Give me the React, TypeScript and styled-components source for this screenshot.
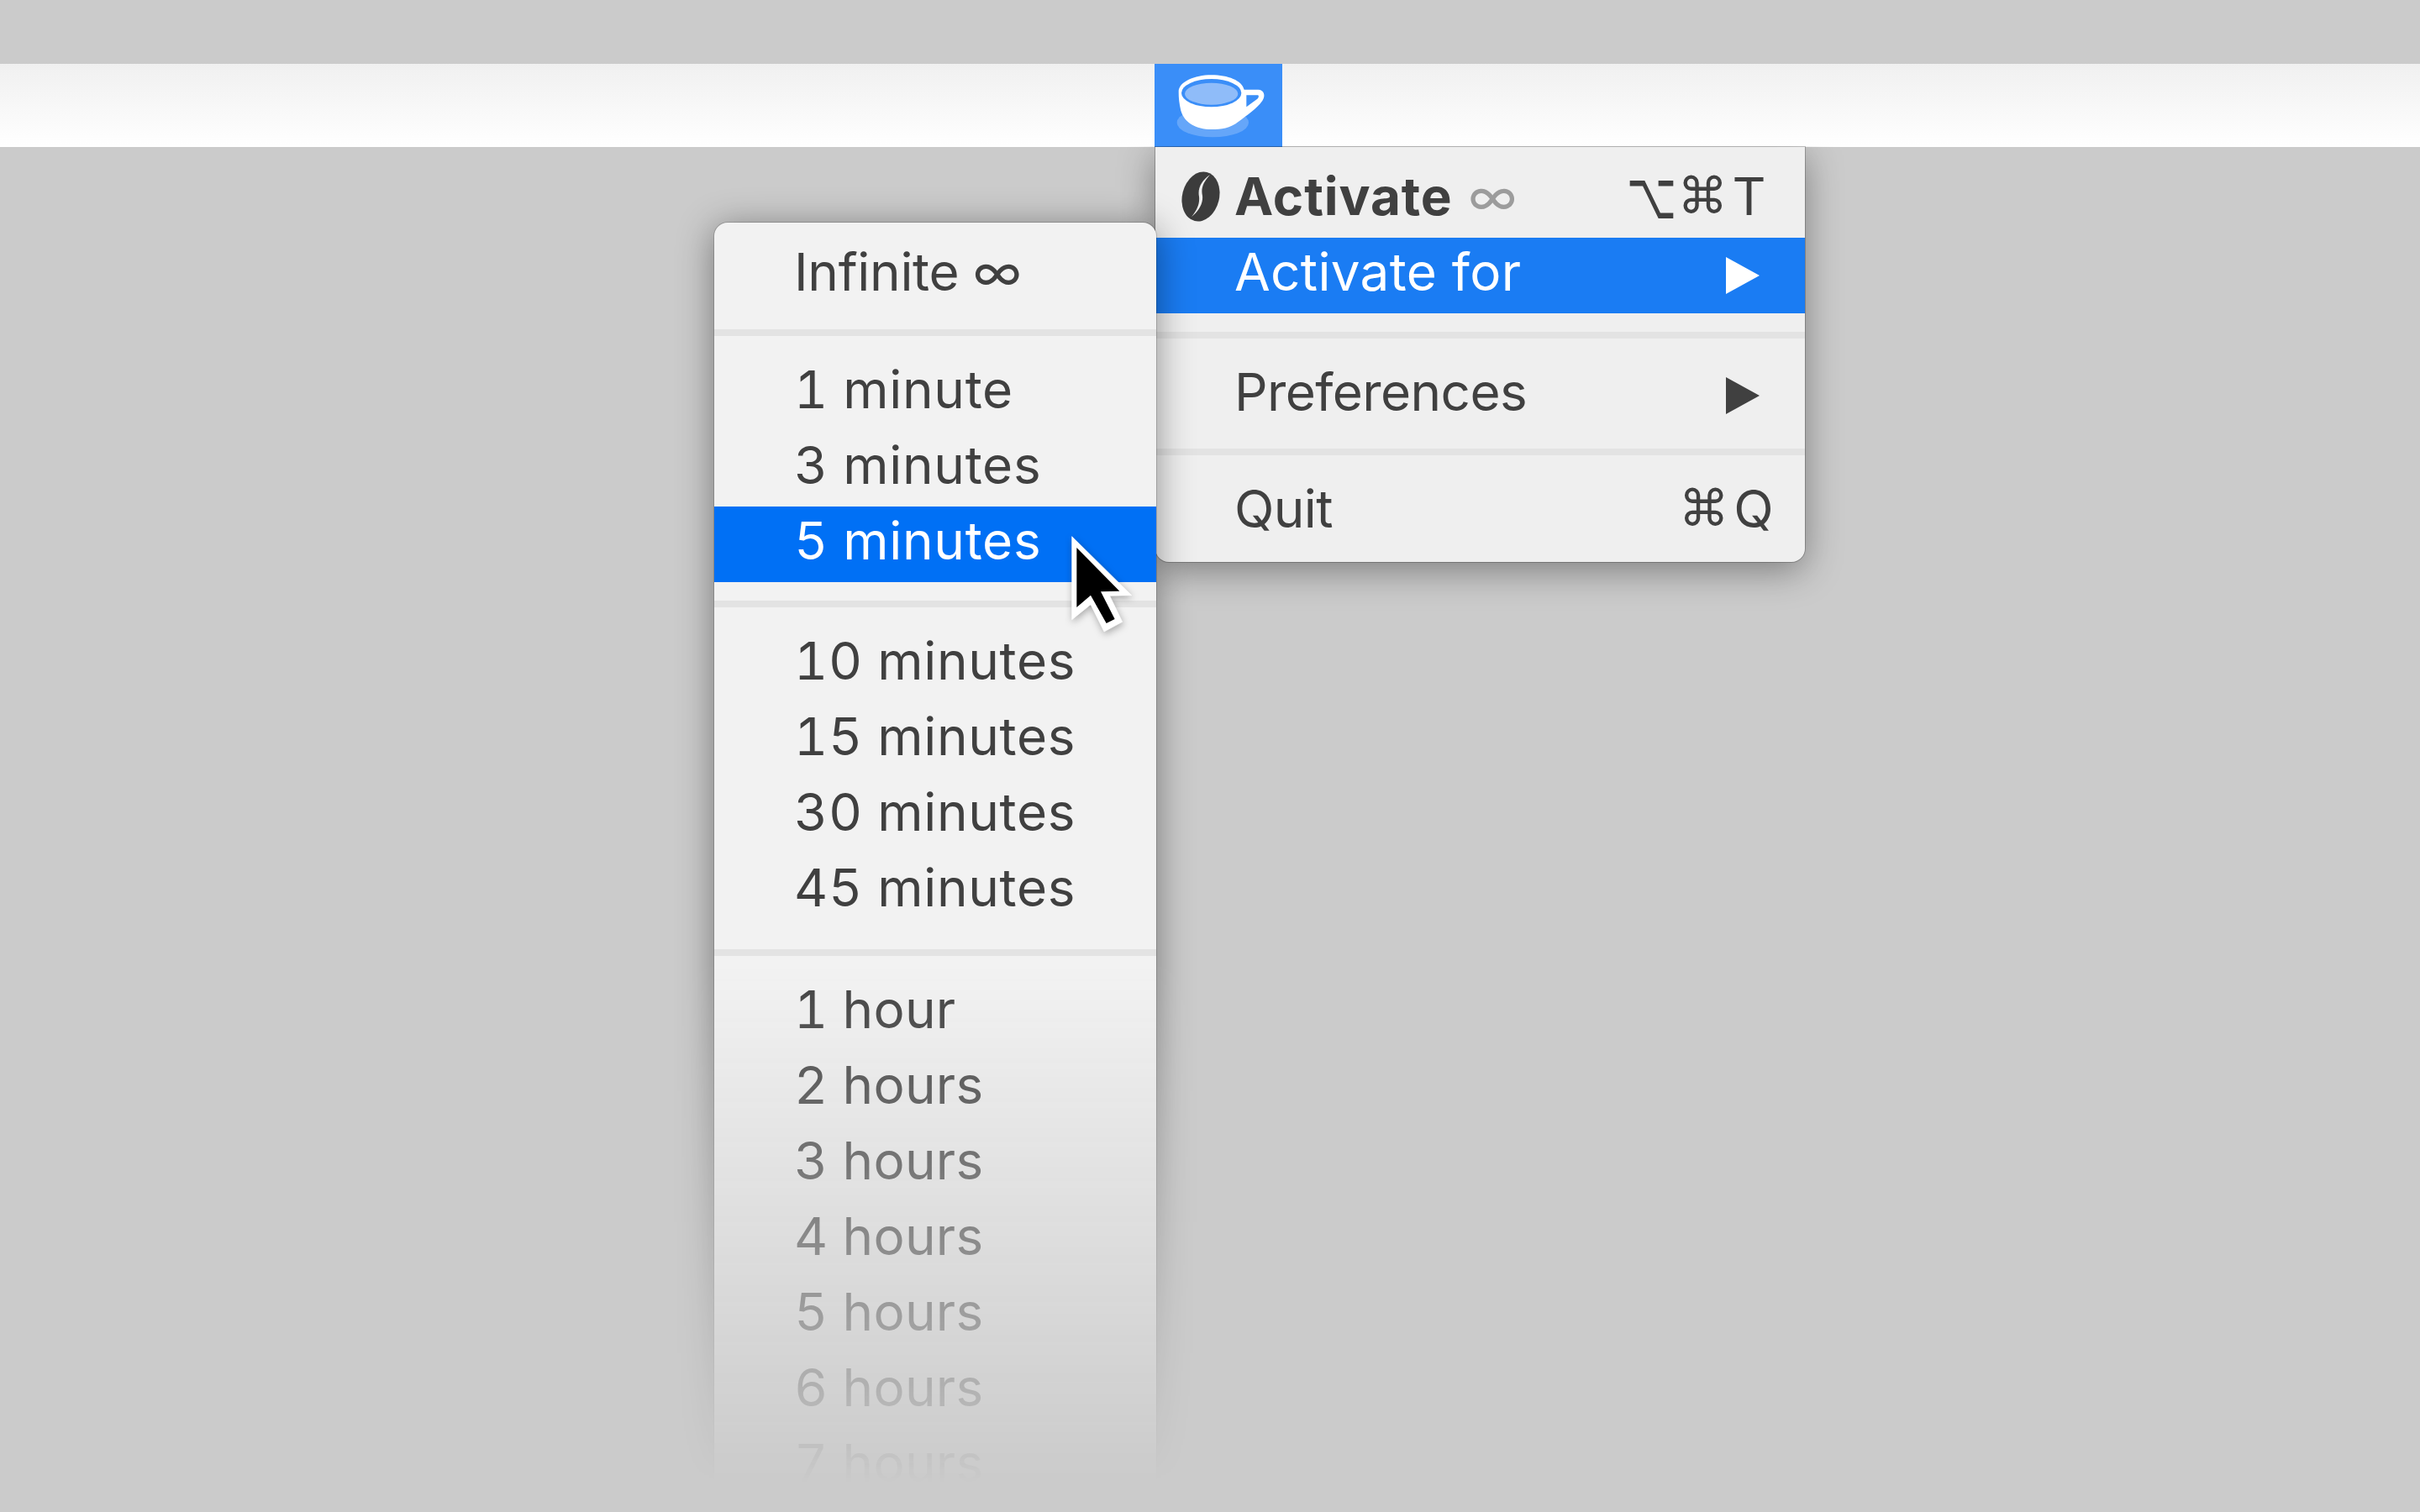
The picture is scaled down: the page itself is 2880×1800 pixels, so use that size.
import styled, { createGlobalStyle } from 'styled-components';

const GlobalStyle = createGlobalStyle`
  html, body {
    margin: 0;
    height: 1800px;
    overflow: hidden;
    background: #cbcbcb;
    font-family: Inter, "DejaVu Sans", sans-serif;
  }
`;

const submenuGroups = [
  { gapAbove: 0, tracking: -0.3, items: ['Infinite ∞'] },
  { gapAbove: 19, tracking: 0.7, items: ['1 minute', '3 minutes', '5 minutes'] },
  { gapAbove: 22, tracking: 0.7, items: ['10 minutes', '15 minutes', '30 minutes', '45 minutes'] },
  { gapAbove: 24, tracking: 0.3, items: ['1 hour', '2 hours', '3 hours', '4 hours', '5 hours', '6 hours', '7 hours'] },
];

function CupIcon() {
  return (
    <svg width="152" height="99" viewBox="42 18 456 297">
      <ellipse cx="250" cy="228" rx="128" ry="52" fill="#fff" opacity="0.22" />
      <path
        d="M128 118 C128 82 185 58 245 58 C305 58 354 78 362 110 L412 110 C432 110 440 130 427 150 C405 180 372 202 342 224 C312 248 280 252 245 252 C190 252 148 227 136 185 C130 160 128 140 128 118 Z"
        fill="#fff"
      />
      <path d="M370 130 L410 130 C415 130 415 138 409 143 L370 172 Z" fill="#3a8ef8" />
      <ellipse cx="245" cy="122" rx="107" ry="50" fill="#3a8ef8" />
      <ellipse cx="245" cy="125" rx="95" ry="39" fill="#8fbcf9" />
    </svg>
  );
}

function BeanIcon() {
  return (
    <svg width="52" height="60" viewBox="0 0 52 60">
      <ellipse cx="26" cy="30" rx="22" ry="30" fill="#3c3c3c" transform="rotate(14 26 30)" />
      <path d="M37 4 C29 13 26 20 28 29 C29 38 24 47 15 54 C21 47 25 39 24 30 C22 20 27 11 37 4 Z" fill="#efefef" />
    </svg>
  );
}

function Cursor() {
  return (
    <svg width="74" height="116" viewBox="103 113 222 348">
      <path
        d="M105 115 L318 325 L240 327 L285 420 L220 455 L172 358 L105 412 Z"
        fill="#fff"
        stroke="#fff"
        strokeWidth="2"
        strokeLinejoin="round"
      />
      <path d="M122 155 L275 310 L208 312 L258 410 L228 425 L172 325 L122 368 Z" fill="#000" />
    </svg>
  );
}

export default function App() {
  return (
    <Page>
      <GlobalStyle />
      <MenuBar>
        <StatusItem>
          <CupIcon />
        </StatusItem>
        <MainMenu>
          <MenuRow>
            <BeanSlot>
              <BeanIcon />
            </BeanSlot>
            <BoldLabel>
              Activate <Muted>∞</Muted>
            </BoldLabel>
            <Shortcut $right={47}>
              <OptionGlyph>⌥</OptionGlyph>
              <Glyph>⌘</Glyph>T
            </Shortcut>
          </MenuRow>
          <ActiveRow>
            <span>Activate for</span>
            <Arrow $light />
          </ActiveRow>
          <Separator $above={22} $below={23} />
          <MenuRow>
            <span>Preferences</span>
            <Arrow />
          </MenuRow>
          <Separator $above={18} $below={23} />
          <MenuRow>
            <span>Quit</span>
            <Shortcut $right={38}>
              <Glyph>⌘</Glyph>Q
            </Shortcut>
          </MenuRow>
        </MainMenu>
        <SubmenuFade>
          <Submenu>
            {submenuGroups.map((group) => (
              <div key={group.items[0]}>
                {group.gapAbove > 0 && <Separator $above={group.gapAbove} $below={23} />}
                {group.items.map((item) =>
                  item === '5 minutes' ? (
                    <SubmenuActiveRow key={item} $tracking={group.tracking}>
                      {item}
                      <CursorSpot>
                        <Cursor />
                      </CursorSpot>
                    </SubmenuActiveRow>
                  ) : (
                    <SubmenuRow key={item} $tracking={group.tracking}>
                      {item}
                    </SubmenuRow>
                  ),
                )}
              </div>
            ))}
          </Submenu>
        </SubmenuFade>
      </MenuBar>
    </Page>
  );
}

const Page = styled.div`
  width: 2880px;
  height: 1800px;
  padding-top: 76px;
  box-sizing: border-box;
  overflow: hidden;
  filter: blur(0.7px);
`;

const MenuBar = styled.div`
  position: relative;
  height: 99px;
  padding-left: 1374px;
  background: linear-gradient(#f0f0f0, #ffffff);
`;

const StatusItem = styled.div`
  width: 152px;
  height: 99px;
  background: #3a8ef8;
  display: flex;
`;

const MainMenu = styled.div`
  position: absolute;
  left: 1375px;
  top: 99px;
  width: 773px;
  height: 494px;
  padding-top: 18px;
  box-sizing: border-box;
  background: #efefef;
  border-radius: 0 0 16px 16px;
  box-shadow: 0 0 0 1px rgba(0, 0, 0, 0.22), 0 10px 44px rgba(0, 0, 0, 0.38);
  clip-path: inset(-1px -80px -80px -80px);
  color: #404040;
`;

const MenuRow = styled.div`
  position: relative;
  display: flex;
  align-items: center;
  justify-content: space-between;
  height: 90px;
  padding: 0 0 10px 94px;
  box-sizing: border-box;
  font-size: 62px;
  letter-spacing: -0.6px;
  color: #404040;
`;

const ActiveRow = styled(MenuRow)`
  background: #1a7cf3;
  color: #ffffff;
  letter-spacing: 0.3px;
`;

const BeanSlot = styled.span`
  position: absolute;
  left: 28px;
  top: 11px;
  display: flex;
`;

const BoldLabel = styled.span`
  font-weight: 700;
  letter-spacing: 0.9px;
`;

const Muted = styled.span`
  margin-left: 3px;
  font-weight: 400;
  color: #9c9c9c;
`;

const Shortcut = styled.span<{ $right: number }>`
  display: flex;
  align-items: center;
  margin-right: ${(p) => p.$right}px;
`;

const Glyph = styled.span`
  font-family: "DejaVu Sans", sans-serif;
  font-size: 60px;
  margin-right: 6px;
`;

const OptionGlyph = styled(Glyph)`
  display: inline-block;
  margin-right: -3px;
  transform: scale(0.86, 1.3);
`;

const Arrow = styled.span<{ $light?: boolean }>`
  width: 0;
  height: 0;
  margin: 10px 54px 0 0;
  border-style: solid;
  border-width: 22px 0 22px 40px;
  border-color: transparent transparent transparent ${(p) => (p.$light ? '#ffffff' : '#404040')};
`;

const Separator = styled.div<{ $above: number; $below: number }>`
  height: 8px;
  margin: ${(p) => p.$above}px 0 ${(p) => p.$below}px;
  background: #e3e3e3;
`;

const SubmenuFade = styled.div`
  position: absolute;
  left: 770px;
  top: 129px;
  width: 686px;
  height: 1595px;
  padding: 60px 80px 0;
  box-sizing: border-box;
  overflow: hidden;
  mask-image: linear-gradient(#000 0, #000 940px, transparent 1560px);
`;

const Submenu = styled.div`
  padding-top: 18px;
  height: 1700px;
  background: #f2f2f2;
  border-radius: 16px 16px 0 0;
  box-shadow: 0 0 0 1px rgba(0, 0, 0, 0.16), 0 6px 44px rgba(0, 0, 0, 0.42);
`;

const SubmenuRow = styled.div<{ $tracking: number }>`
  position: relative;
  height: 90px;
  padding: 0 0 10px 95px;
  box-sizing: border-box;
  display: flex;
  align-items: center;
  font-size: 62px;
  letter-spacing: ${(p) => p.$tracking}px;
  font-variant-numeric: tabular-nums;
  color: #404040;
`;

const SubmenuActiveRow = styled(SubmenuRow)`
  background: #0070f5;
  color: #ffffff;
`;

const CursorSpot = styled.span`
  position: absolute;
  left: 425px;
  top: 35px;
  display: flex;
  filter: drop-shadow(1px 3px 4px rgba(0, 0, 0, 0.3));
`;
